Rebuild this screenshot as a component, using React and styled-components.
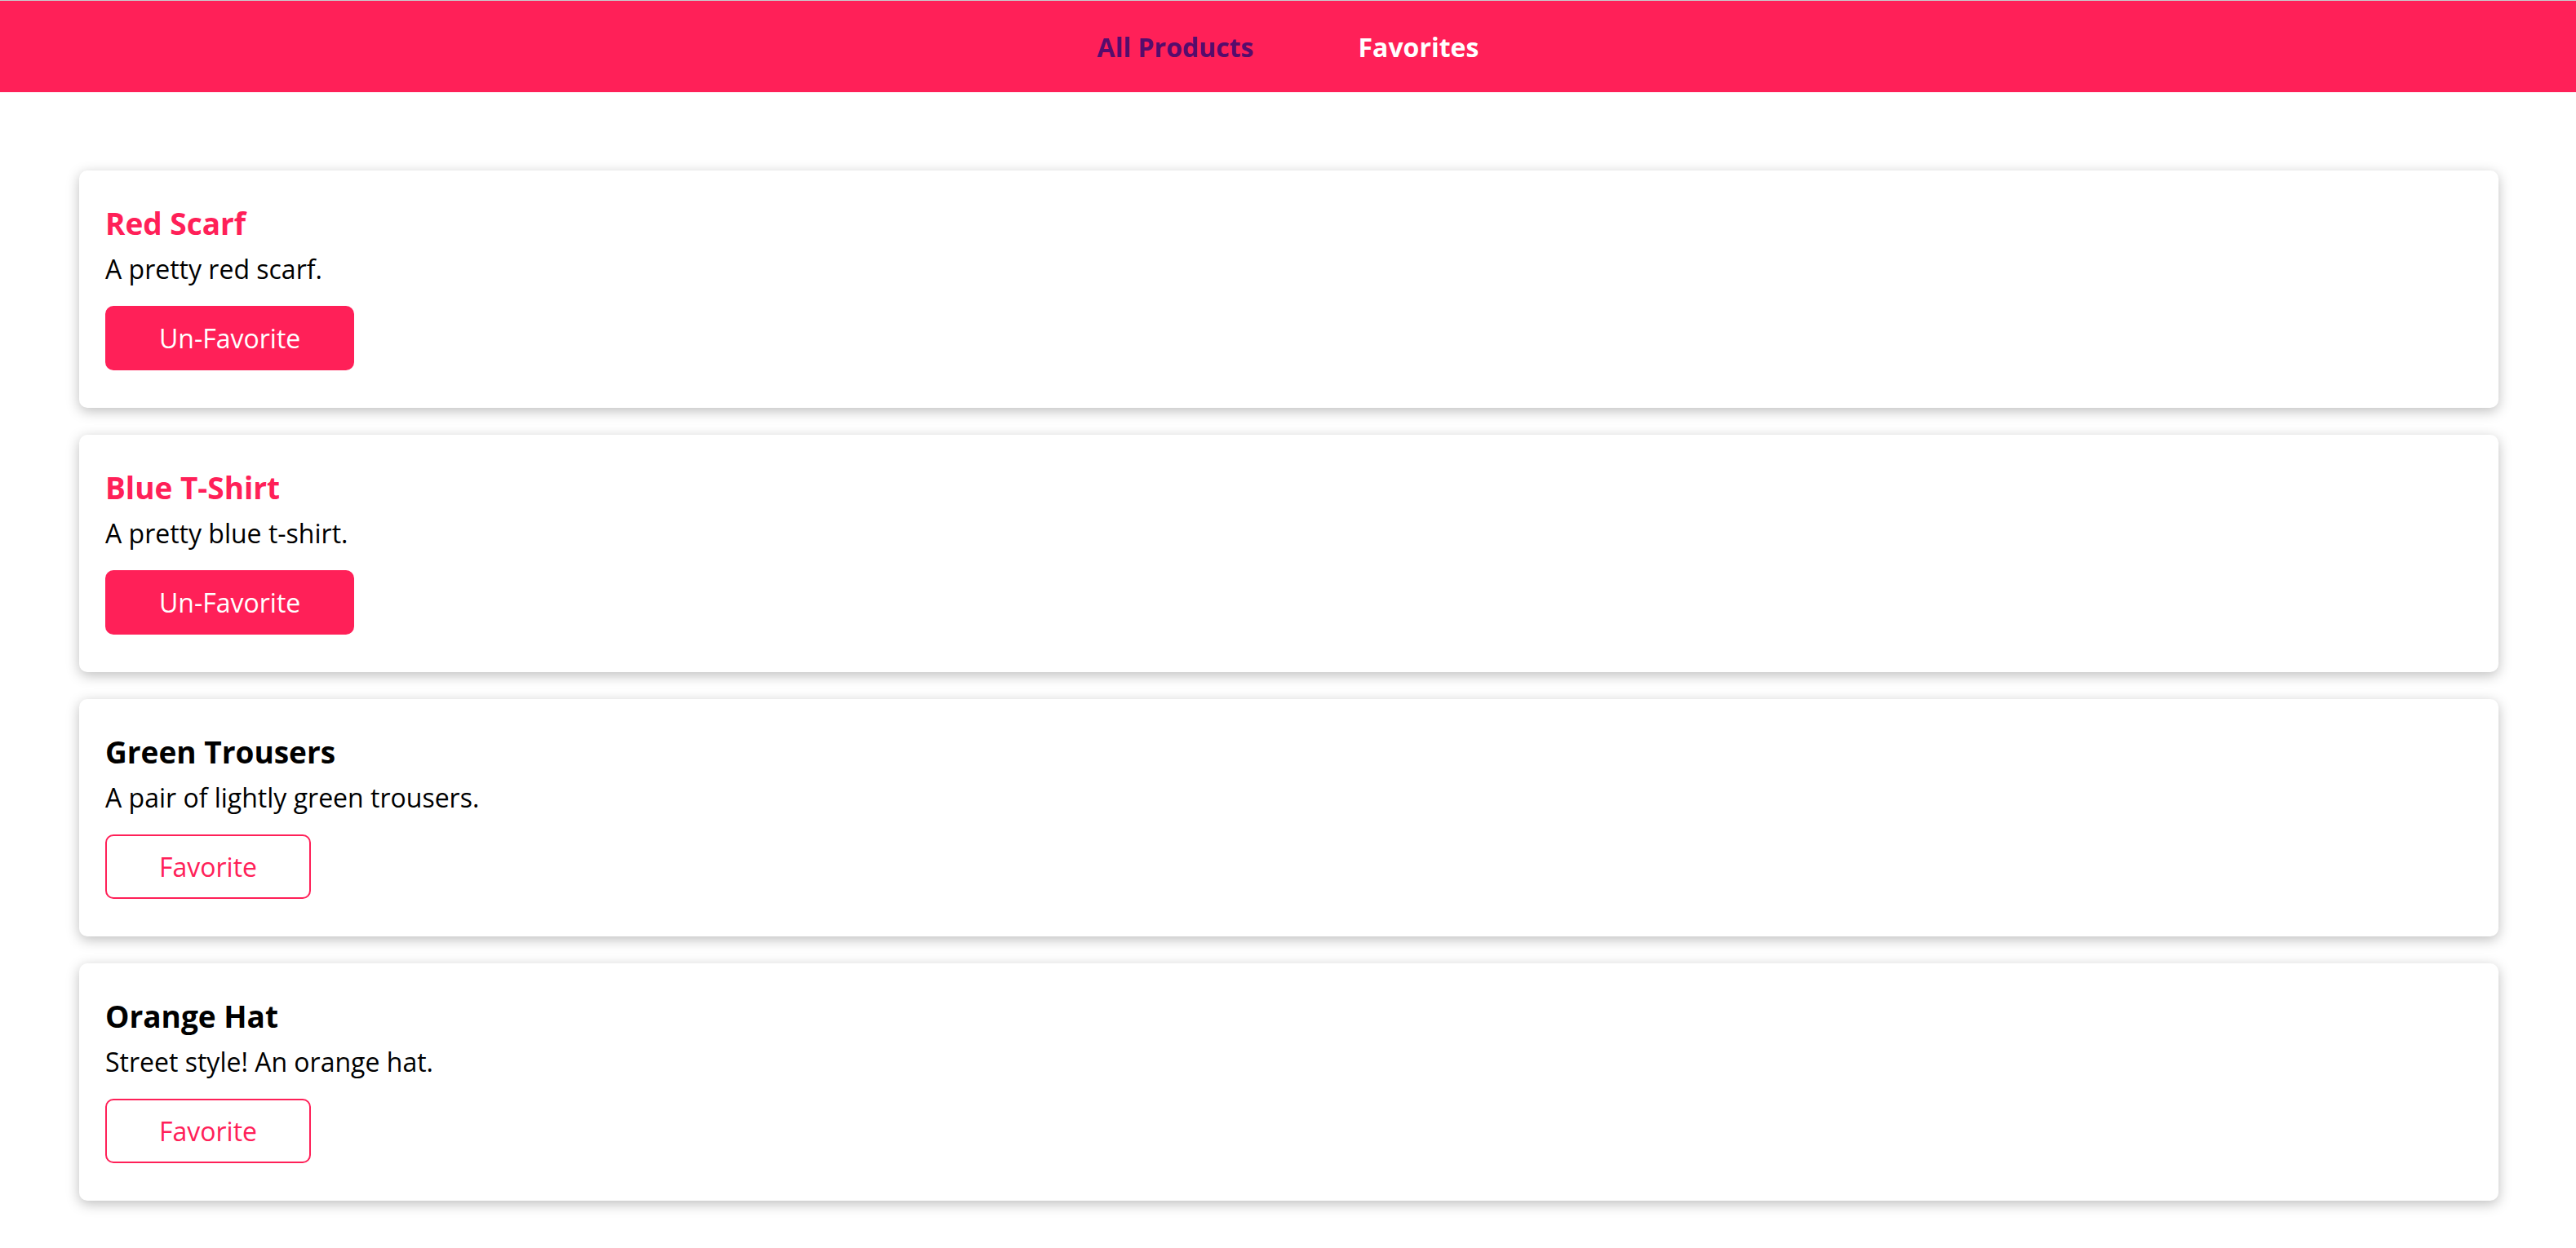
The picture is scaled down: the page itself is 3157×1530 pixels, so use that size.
import styled, { createGlobalStyle } from 'styled-components';

const GlobalStyle = createGlobalStyle`
  * {
    box-sizing: border-box;
  }
  body {
    margin: 0;
    font-family: 'Open Sans', 'Noto Sans', sans-serif;
    background: #fff;
  }
`;

const products = [
  { id: 'p1', title: 'Red Scarf', description: 'A pretty red scarf.', isFavorite: true },
  { id: 'p2', title: 'Blue T-Shirt', description: 'A pretty blue t-shirt.', isFavorite: true },
  { id: 'p3', title: 'Green Trousers', description: 'A pair of lightly green trousers.', isFavorite: false },
  { id: 'p4', title: 'Orange Hat', description: 'Street style! An orange hat.', isFavorite: false },
];

const Header = styled.header`
  width: 100%;
  height: 113px;
  border-top: 1px solid #c6cfcf;
  background: #ff2058;
  display: flex;
  align-items: center;
  justify-content: center;
`;

const NavList = styled.ul`
  list-style: none;
  margin: 0;
  padding: 0;
  display: flex;
  gap: 128px;
`;

const NavLink = styled.a`
  text-decoration: none;
  font-size: 32px;
  font-weight: 700;
  color: ${({ $active }) => ($active ? '#550c6c' : '#fff')};
  cursor: pointer;
`;

const Main = styled.main`
  padding: 96px 95px 60px 97px;
`;

const ProductList = styled.ul`
  list-style: none;
  margin: 0;
  padding: 0;
  display: flex;
  flex-direction: column;
  gap: 33px;
`;

const Card = styled.li`
  background: #fff;
  border-radius: 10px;
  box-shadow: 0 4px 16px rgba(0, 0, 0, 0.26);
  padding: 39px 32px 46px;
`;

const Title = styled.h2`
  margin: 0 0 9px;
  font-size: 37px;
  font-weight: 700;
  color: ${({ $fav }) => ($fav ? '#ff2058' : '#000')};
`;

const Description = styled.p`
  margin: 0 0 24px;
  font-size: 32px;
  color: #000;
`;

const Button = styled.button`
  font: inherit;
  font-size: 32px;
  padding: 16px 64px;
  border-radius: 10px;
  border: 2px solid #ff2058;
  background: ${({ $filled }) => ($filled ? '#ff2058' : '#fff')};
  color: ${({ $filled }) => ($filled ? '#fff' : '#ff2058')};
  cursor: pointer;
`;

export default function App() {
  return (
    <>
      <GlobalStyle />
      <Header>
        <nav>
          <NavList>
            <li><NavLink $active>All Products</NavLink></li>
            <li><NavLink>Favorites</NavLink></li>
          </NavList>
        </nav>
      </Header>
      <Main>
        <ProductList>
          {products.map((p) => (
            <Card key={p.id}>
              <Title $fav={p.isFavorite}>{p.title}</Title>
              <Description>{p.description}</Description>
              <Button $filled={p.isFavorite}>
                {p.isFavorite ? 'Un-Favorite' : 'Favorite'}
              </Button>
            </Card>
          ))}
        </ProductList>
      </Main>
    </>
  );
}
